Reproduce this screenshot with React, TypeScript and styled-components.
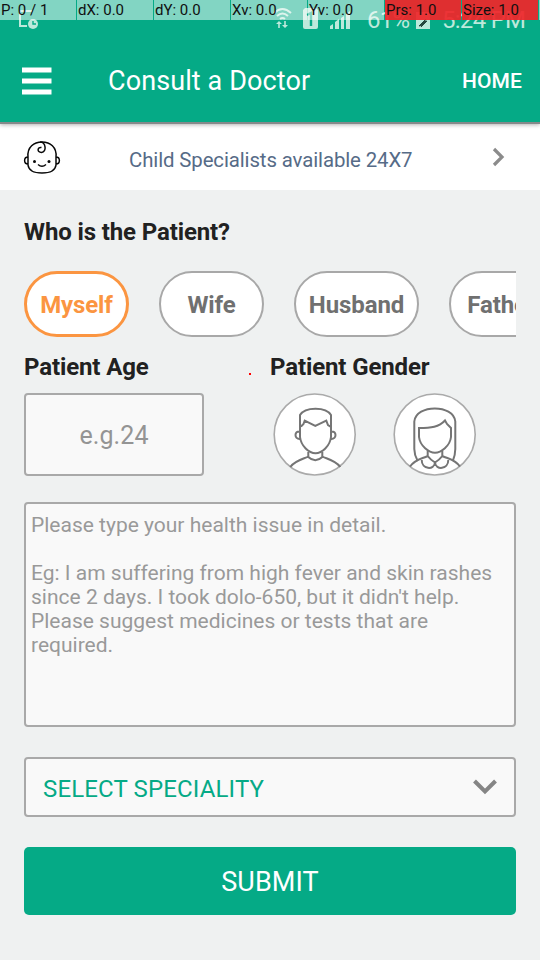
import React from "react";
import styled, { createGlobalStyle } from "styled-components";

const GlobalStyle = createGlobalStyle`
  * { box-sizing: border-box; }
  body { margin: 0; background: #eff1f1; font-family: Roboto, "Liberation Sans", sans-serif; }
  button, input, textarea { font-family: inherit; margin: 0; }
`;

const Screen = styled.div`
  width: 540px;
  height: 960px;
  display: flex;
  flex-direction: column;
  overflow: hidden;
  background: #eff1f1;
`;

const Header = styled.header`
  height: 124px;
  flex: none;
  position: relative;
  z-index: 1;
  display: flex;
  flex-direction: column;
  background: #05aa86;
  border-bottom: 2px solid #85898a;
  box-shadow: 0 1px 4px rgba(0, 0, 0, 0.3);
`;

const StatusBar = styled.div`
  height: 40px;
  position: relative;
`;

const StatusIcons = styled.svg`
  display: block;
  font-size: 24px;
`;

const PointerOverlay = styled.div`
  position: absolute;
  inset: 0 0 auto 0;
  height: 20px;
  display: grid;
  grid-template-columns: repeat(7, 76px) 1px;
  column-gap: 1px;
`;

const PointerCell = styled.div<{ $alert?: boolean }>`
  padding-left: 1px;
  background: ${(p) => (p.$alert ? "rgba(240, 38, 42, 0.93)" : "rgba(255, 255, 255, 0.5)")};
  color: #101010;
  font-size: 15px;
  line-height: 20px;
  white-space: nowrap;
`;

const Toolbar = styled.div`
  height: 82px;
  padding: 0 18px 0 22px;
  display: flex;
  align-items: center;
  color: #fff;
`;

const MenuButton = styled.button`
  width: 30px;
  height: 28px;
  padding: 0;
  border: 0;
  background: none;
`;

const Title = styled.h1`
  flex: 1;
  margin: 0 0 0 56px;
  font-size: 27px;
  font-weight: 400;
  line-height: 32px;
  letter-spacing: 0.1px;
`;

const HomeLink = styled.span`
  font-size: 21px;
  font-weight: 500;
  letter-spacing: 0.1px;
`;

const Banner = styled.div`
  height: 66px;
  flex: none;
  padding: 0 34px 0 23px;
  display: flex;
  align-items: center;
  background: #fff;
`;

const BannerText = styled.span`
  flex: 1;
  margin-left: 68px;
  padding-top: 6px;
  color: #566b87;
  font-size: 20.4px;
  letter-spacing: -0.11px;
`;

const Form = styled.main`
  padding: 26px 24px 0;
  display: flex;
  flex-direction: column;
`;

const Label = styled.h2`
  margin: 0;
  color: #212121;
  font-size: 24px;
  line-height: 32px;
  font-weight: 700;
  letter-spacing: -0.12px;
`;

const PatientList = styled.div`
  margin: 23px 0 14px;
  display: flex;
  gap: 30px;
  overflow: hidden;
`;

const Chip = styled.button<{ $selected?: boolean; $width: number }>`
  flex: 0 0 ${(p) => p.$width}px;
  height: 66px;
  padding: 2px 0 0;
  border: ${(p) => (p.$selected ? "3px solid #fb9541" : "2px solid #a8a8a8")};
  border-radius: 33px;
  background: #fff;
  color: ${(p) => (p.$selected ? "#fb9541" : "#707070")};
  font-size: 24px;
  font-weight: 700;
  letter-spacing: -0.1px;
`;

const DetailRow = styled.div`
  display: grid;
  grid-template-columns: 225px 21px 1fr;
`;

const Field = styled.div`
  display: flex;
  flex-direction: column;
  gap: 10px;
`;

const RequiredMark = styled.i`
  width: 2px;
  height: 2px;
  margin-top: 22px;
  background: #f00;
`;

const AgeInput = styled.input`
  width: 180px;
  height: 83px;
  padding: 2px 0 0;
  border: 2px solid #a9a9a9;
  border-radius: 4px;
  background: #f9f9f9;
  font-size: 25px;
  letter-spacing: 0.1px;
  text-align: center;
  &::placeholder { color: #949494; }
`;

const Genders = styled.div`
  display: flex;
  gap: 36px;
  margin-left: 3px;
`;

const Portrait = styled.svg`
  width: 84px;
  height: 84px;
  fill: none;
  stroke: #757575;
  stroke-width: 2;
`;

const IssueInput = styled.textarea`
  height: 225px;
  margin-top: 25px;
  padding: 9px 5px;
  border: 2px solid #a9a9a9;
  border-radius: 4px;
  background: #f9f9f9;
  font-size: 21px;
  line-height: 24px;
  resize: none;
  &::placeholder { color: #999; }
`;

const SpecialitySelect = styled.button`
  height: 60px;
  margin-top: 30px;
  padding: 3px 16px 0 17px;
  display: flex;
  align-items: center;
  justify-content: space-between;
  border: 2px solid #a9a9a9;
  border-radius: 4px;
  background: #f9f9f9;
  color: #05aa86;
  font-size: 24px;
  letter-spacing: 0.15px;
`;

const SelectChevron = styled.svg`
  width: 26px;
  height: 18px;
  margin-bottom: 3px;
  fill: none;
  stroke: #858585;
  stroke-width: 4;
`;

const SubmitButton = styled.button`
  height: 68px;
  margin-top: 30px;
  padding: 2px 0 0;
  border: 0;
  border-radius: 5px;
  background: #05aa86;
  color: #fff;
  font-size: 27px;
  letter-spacing: 0.1px;
`;

const readings = ["P: 0 / 1", "dX: 0.0", "dY: 0.0", "Xv: 0.0", "Yv: 0.0", "Prs: 1.0", "Size: 1.0"];
const patients = [
  { name: "Myself", width: 105 },
  { name: "Wife", width: 105 },
  { name: "Husband", width: 125 },
  { name: "Father", width: 105 },
];
const issueHint =
  "Please type your health issue in detail.\n\nEg: I am suffering from high fever and skin rashes since 2 days. I took dolo-650, but it didn't help. Please suggest medicines or tests that are required.";

const StatusGraphics = () => (
  <StatusIcons width="540" height="40" fill="#bce9db">
    <path d="M20 11h12M20 11v15h7" fill="none" stroke="#bce9db" strokeWidth="2" />
    <circle cx="33" cy="24" r="5" />
    <path d="M33 21v3h3" fill="none" stroke="#05aa86" strokeWidth="1.4" />
    <g fill="none" stroke="#bce9db" strokeWidth="2">
      <path d="M274 13q8.500-8 17 0M277 16q5.500-5 11 0M280 19q2.500-2 5 0" />
      <path d="M279 28v-6M285 21v6" strokeWidth="1.6" />
    </g>
    <path d="m276 24 3-3 3 3zm6 1 3 3 3-3z" />
    <path d="M305 8h11l2 2v17q0 2-2 2h-11q-2 0-2-2V10z" />
    <path d="m307 15 4-2v13" fill="none" stroke="#05aa86" strokeWidth="2.400" />
    <path d="M330 29v-3l3-2v5zM335 29v-7l4-3v10zM341 29V18l3-2v13zM346 29V14l4-3v18z" />
    <text x="367" y="28" textLength="43">61%</text>
    <path d="M416 12h14v17h-14z" />
    <path d="m426 19-7 7 4-1-2 2 6-6-3 1z" fill="#25483f" stroke="#25483f" />
    <text x="442" y="28" textLength="84">5:24 PM</text>
  </StatusIcons>
);

const BabyIcon = () => (
  <svg width="38" height="36" viewBox="0 0 38 36" fill="none" stroke="#080808" strokeWidth="1.5">
    <path d="M5 18C4 8 11 3 19 3s15 5 14 15v8q-1 8-14 8T5 26zM5 18c-4.500 0-4.500 7 0 7M33 18c4.500 0 4.500 7 0 7" />
    <path d="M17 3c6 0 7 10 1.500 10.500-5 0-4-6 0-5M15 25.500q4 3.500 8 0" />
    <circle cx="11.500" cy="22.500" r="1.500" fill="#080808" stroke="none" />
    <circle cx="26" cy="22.500" r="1.500" fill="#080808" stroke="none" />
  </svg>
);

const MalePortrait = () => (
  <Portrait viewBox="0 0 84 84">
    <circle cx="41.700" cy="41.500" r="40.500" fill="#fff" stroke="#aaa" strokeWidth="1.600" />
    <path d="M27 34V22C32 13.500 53 13.500 58 22v12M28 33.500l2.500-2.500 1.200-3.300 10.600 5.300 11-5.300L55 32l3 2" />
    <path d="M27 34v10C28 53 36 60.300 42.500 60.300S57 53 58 44V34M27 38.500c-6-1-6 8 0 7.500M58 38.500c6-1 6 8 0 7.500" />
    <path d="M35.300 59v5q7 6.500 14 0v-5M35.300 63.500c-3 2-13 3.500-18 10.500M49.300 63.500c3 2 13 3.500 18 10.500" />
  </Portrait>
);

const FemalePortrait = () => (
  <Portrait viewBox="0 0 84 84">
    <circle cx="41.700" cy="41.500" r="40.500" fill="#fff" stroke="#aaa" strokeWidth="1.600" />
    <path d="M24.700 68q-3.400-6-3.400-12V28.500C23 11 60.600 11 62.300 28.500V56q0 6-2.500 12" />
    <path d="M26 35v9c1 9 10 15.700 16 15.700S57 53 58 44v-9l-4-4-2-3.500C46 34 38 35 26 35z" />
    <path d="M34.700 58v5q3 4 7.300 6.500 4.300-2.500 7.300-6.500v-5M34.700 63c-6 3-12 3-17.700 10.500M49.300 63c6 3 12 3 17.700 10.500" />
    <path d="M28.700 67c0 9.500 12.500 10.500 13.300 2.500.8 8 13.300 7 13.300-2.500" />
  </Portrait>
);

export default function App() {
  return (
    <>
      <GlobalStyle />
      <Screen>
        <Header>
          <StatusBar>
            <StatusGraphics />
            <PointerOverlay>
              {readings.map((text, i) => (
                <PointerCell key={text} $alert={i > 4}>{text}</PointerCell>
              ))}
              <PointerCell />
            </PointerOverlay>
          </StatusBar>
          <Toolbar>
            <MenuButton aria-label="Menu">
              <svg width="30" height="28" viewBox="0 0 30 28" fill="#fff" display="block">
                <path d="M0 .5h29.500v5H0zM0 11.500h29.500v5H0zM0 22.500h29.500v5H0z" />
              </svg>
            </MenuButton>
            <Title>Consult a Doctor</Title>
            <HomeLink>HOME</HomeLink>
          </Toolbar>
        </Header>
        <Banner>
          <BabyIcon />
          <BannerText>Child Specialists available 24X7</BannerText>
          <svg width="14" height="20" fill="none" stroke="#8b8b8b" strokeWidth="3.200">
            <path d="m2 2 8 8-8 8" />
          </svg>
        </Banner>
        <Form>
          <Label>Who is the Patient?</Label>
          <PatientList>
            {patients.map((p, i) => (
              <Chip key={p.name} $width={p.width} $selected={i === 0}>{p.name}</Chip>
            ))}
          </PatientList>
          <DetailRow>
            <Field>
              <Label>Patient Age</Label>
              <AgeInput placeholder="e.g.24" />
            </Field>
            <RequiredMark />
            <Field>
              <Label>Patient Gender</Label>
              <Genders>
                <MalePortrait />
                <FemalePortrait />
              </Genders>
            </Field>
          </DetailRow>
          <IssueInput placeholder={issueHint} />
          <SpecialitySelect>
            SELECT SPECIALITY
            <SelectChevron>
              <path d="m2.500 3 10.500 10.500L23.500 3" />
            </SelectChevron>
          </SpecialitySelect>
          <SubmitButton>SUBMIT</SubmitButton>
        </Form>
      </Screen>
    </>
  );
}
